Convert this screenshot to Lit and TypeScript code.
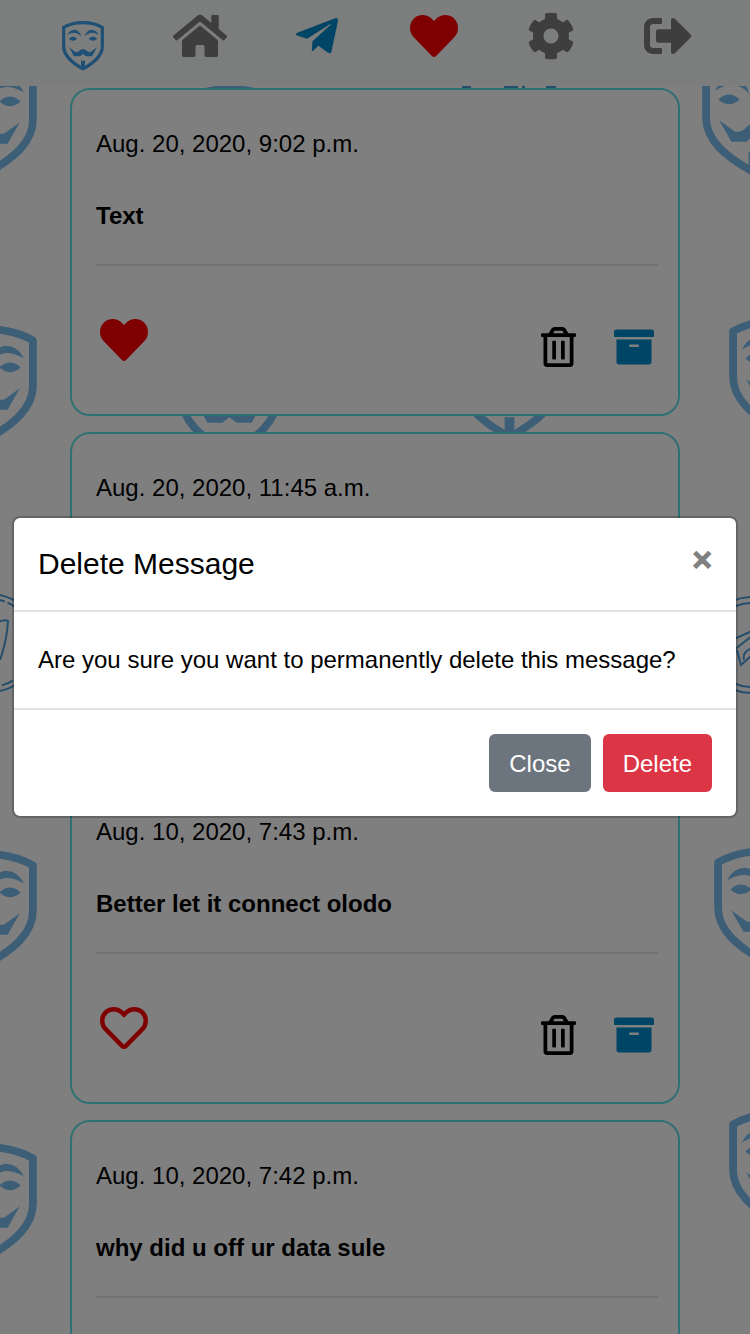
import { LitElement, html, css, svg } from "lit";
import { customElement, property } from "lit/decorators.js";

const ICONS: Record<string, { w: number; d: string }> = {
  home: { w: 576, d: "M280.37 148.26L96 300.11V464a16 16 0 0 0 16 16l112.06-.29a16 16 0 0 0 15.92-16V368a16 16 0 0 1 16-16h64a16 16 0 0 1 16 16v95.64a16 16 0 0 0 16 16.05L464 480a16 16 0 0 0 16-16V300L295.67 148.26a12.19 12.19 0 0 0-15.3 0zM571.6 251.47L488 182.56V44.05a12 12 0 0 0-12-12h-56a12 12 0 0 0-12 12v72.61L318.47 43a48 48 0 0 0-61 0L4.34 251.47a12 12 0 0 0-1.6 16.9l25.5 31A12 12 0 0 0 45.15 301l235.22-193.74a12.19 12.19 0 0 1 15.3 0L530.9 301a12 12 0 0 0 16.9-1.6l25.5-31a12 12 0 0 0-1.7-16.93z" },
  plane: { w: 448, d: "M446.7 98.6l-67.6 318.8c-5.1 22.5-18.4 28.1-37.3 17.5l-103-75.9-49.7 47.8c-5.5 5.5-10.1 10.1-20.7 10.1l7.4-104.9 190.9-172.5c8.3-7.4-1.8-11.5-12.9-4.1L117.8 284 16.2 252.2c-22.1-6.9-22.5-22.1 4.6-32.7L418.2 66.4c18.4-6.9 34.5 4.1 28.5 32.2z" },
  heart: { w: 512, d: "M462.3 62.6C407.5 15.9 326 24.3 275.7 76.2L256 96.5l-19.7-20.3C186.1 24.3 104.5 15.9 49.7 62.6c-62.8 53.6-66.1 149.8-9.9 207.9l193.5 199.8c12.5 12.9 32.8 12.9 45.3 0l193.5-199.8c56.3-58.1 53-154.3-9.8-207.9z" },
  heartOutline: { w: 512, d: "M458.4 64.3C400.6 15.7 311.3 23 256 79.3 200.7 23 111.4 15.6 53.6 64.3-21.6 127.6-10.6 230.8 43 285.5l175.4 178.7c10 10.2 23.4 15.9 37.6 15.9 14.3 0 27.6-5.6 37.6-15.8L469 285.6c53.5-54.7 64.7-157.9-10.6-221.3zm-23.6 187.5L259.4 430.5c-2.4 2.4-4.4 2.4-6.8 0L77.2 251.8c-36.5-37.2-43.9-107.6 7.3-150.7 38.9-32.7 98.9-27.8 136.5 10.5l35 35.7 35-35.7c37.8-38.5 97.8-43.2 136.5-10.6 51.1 43.1 43.5 113.9 7.3 150.8z" },
  cog: { w: 512, d: "M487.4 315.7l-42.6-24.6c4.3-23.2 4.3-47 0-70.2l42.6-24.6c4.9-2.8 7.1-8.6 5.5-14-11.1-35.6-30-67.8-54.7-94.6-3.8-4.1-10-5.1-14.8-2.3L380.8 110c-17.9-15.4-38.5-27.3-60.8-35.1V25.8c0-5.6-3.9-10.5-9.4-11.7-36.7-8.2-74.3-7.8-109.2 0-5.5 1.2-9.4 6.1-9.4 11.7V75c-22.2 7.9-42.8 19.8-60.8 35.1L88.7 85.5c-4.9-2.8-11-1.9-14.8 2.3-24.7 26.7-43.6 58.9-54.7 94.6-1.7 5.4.6 11.2 5.5 14L67.3 221c-4.3 23.2-4.3 47 0 70.2l-42.6 24.6c-4.9 2.8-7.1 8.6-5.5 14 11.1 35.6 30 67.8 54.7 94.6 3.8 4.1 10 5.1 14.8 2.3l42.6-24.6c17.9 15.4 38.5 27.3 60.8 35.1v49.2c0 5.6 3.9 10.5 9.4 11.7 36.7 8.2 74.3 7.8 109.2 0 5.5-1.2 9.4-6.1 9.4-11.7v-49.2c22.2-7.9 42.8-19.8 60.8-35.1l42.6 24.6c4.9 2.8 11 1.9 14.8-2.3 24.7-26.7 43.6-58.9 54.7-94.6 1.5-5.5-.7-11.3-5.6-14.1zM256 336c-44.1 0-80-35.9-80-80s35.9-80 80-80 80 35.9 80 80-35.9 80-80 80z" },
  signOut: { w: 512, d: "M497 273L329 441c-15 15-41 4.5-41-17v-96H152c-13.3 0-24-10.7-24-24v-96c0-13.3 10.7-24 24-24h136V88c0-21.4 25.9-32 41-17l168 168c9.3 9.4 9.3 24.6 0 34zM192 436v-40c0-6.6-5.4-12-12-12H96c-17.7 0-32-14.3-32-32V160c0-17.7 14.3-32 32-32h84c6.6 0 12-5.4 12-12V76c0-6.6-5.4-12-12-12H96c-53 0-96 43-96 96v192c0 53 43 96 96 96h84c6.6 0 12-5.4 12-12z" },
  trash: { w: 448, d: "M268 416h24a12 12 0 0 0 12-12V188a12 12 0 0 0-12-12h-24a12 12 0 0 0-12 12v216a12 12 0 0 0 12 12zM432 80h-82.41l-34-56.7A48 48 0 0 0 274.41 0H173.59a48 48 0 0 0-41.16 23.3L98.41 80H16A16 16 0 0 0 0 96v16a16 16 0 0 0 16 16h16v336a48 48 0 0 0 48 48h288a48 48 0 0 0 48-48V128h16a16 16 0 0 0 16-16V96a16 16 0 0 0-16-16zM171.84 50.91A6 6 0 0 1 177 48h94a6 6 0 0 1 5.15 2.91L293.61 80H154.39zM368 464H80V128h288zm-212-48h24a12 12 0 0 0 12-12V188a12 12 0 0 0-12-12h-24a12 12 0 0 0-12 12v216a12 12 0 0 0 12 12z" },
  archive: { w: 512, d: "M32 448c0 17.7 14.3 32 32 32h384c17.7 0 32-14.3 32-32V160H32v288zm160-212c0-6.6 5.4-12 12-12h104c6.6 0 12 5.4 12 12v8c0 6.6-5.4 12-12 12H204c-6.6 0-12-5.4-12-12v-8zM480 32H32C14.3 32 0 46.3 0 64v48c0 8.8 7.2 16 16 16h480c8.8 0 16-7.2 16-16V64c0-17.7-14.3-32-32-32z" },
};

const icon = (name: string) => html`<svg
  class="icon"
  viewBox="0 0 ${ICONS[name].w} 512"
  aria-hidden="true"
><path fill="currentColor" d=${ICONS[name].d}></path></svg>`;

// Guy Fawkes shield, drawn in a 126 x 150 box.
const mask = svg`
  <path fill="none" stroke="currentColor" stroke-width="9.500" stroke-linejoin="round"
    d="M5 19Q30 5 63 5T121 19V76C121 104 98 124 63 144C28 124 5 104 5 76Z"/>
  <path fill="currentColor" d="M16 42Q22 27 38 26Q52 27 58 46Q49 36 38 35Q26 35 16 42ZM110 42Q104 27 88 26Q74 27 68 46Q77 36 88 35Q100 35 110 42Z"/>
  <path fill="currentColor" d="M20 53Q33 41 46 53Q33 65 20 53ZM80 53Q93 41 106 53Q93 65 80 53Z"/>
  <path fill="currentColor" d="M21 79L40 93Q48 95 54 88Q58 83 63 85Q68 83 72 88Q78 95 86 93L105 79L90 106H72L63 99L54 106H36Z"/>
  <path fill="currentColor" d="M57 119H69V146H57Z"/>`;

const WALL_MASKS = [
  [-66, 59], [-66, 325], [-66, 850], [-66, 1143],
  [702, 57], [729, 316], [714, 847], [729, 1109],
  [178, 85], [178, 338], [458, 322],
];

@customElement("message-card")
class MessageCard extends LitElement {
  @property() date = "";
  @property() text = "";
  @property({ type: Boolean }) liked = false;

  static styles = css`
    :host {
      display: block;
      border: 2px solid #5ee2e4;
      border-radius: 20px;
      background: #fff;
      padding: 36px 20px 47px 24px;
      line-height: 36px;
    }
    p { margin: 0; min-height: 36px; }
    .text { margin-top: 36px; font-weight: 700; }
    hr { border: 0; border-top: 2px solid rgba(0, 0, 0, 0.1); margin: 30px 0 50px; }
    .actions { display: flex; justify-content: space-between; padding: 0 4px; }
    .tools { display: flex; gap: 38px; padding-top: 11px; }
    button {
      display: block;
      padding: 0;
      border: 0;
      background: none;
      cursor: pointer;
    }
    .like { align-self: flex-start; color: red; }
    .icon { display: block; height: 40px; }
    .like .icon { height: 48px; }
    .trash { color: #000; }
    .archive { color: #08c; }
  `;

  render() {
    return html`
      <p>${this.date}</p>
      <p class="text">${this.text}</p>
      <hr />
      <div class="actions">
        <button class="like" aria-label="Favourite">${icon(this.liked ? "heart" : "heartOutline")}</button>
        <div class="tools">
          <button class="trash" aria-label="Delete">${icon("trash")}</button>
          <button class="archive" aria-label="Archive">${icon("archive")}</button>
        </div>
      </div>
    `;
  }
}

@customElement("app-root")
class AppRoot extends LitElement {
  static styles = css`
    :host {
      display: block;
      position: relative;
      height: 100vh;
      overflow: hidden;
      background: #fff;
      color: #000;
      font: 24px/36px "Liberation Sans", Arial, sans-serif;
    }
    .wall {
      position: absolute;
      inset: 0;
      width: 100%;
      height: 100%;
      color: #78bcee;
    }
    .badge { fill: none; stroke: #4a9cd6; stroke-width: 2; }
    nav {
      position: relative;
      display: grid;
      grid-template-columns: repeat(6, 1fr);
      justify-items: center;
      align-items: start;
      box-sizing: border-box;
      height: 86px;
      padding: 12px 24px;
      background: #f8fafa;
    }
    nav a { display: block; color: #7c7c7c; }
    nav .icon { display: block; height: 48px; }
    nav .brand { color: #3c9fea; margin-top: 9px; }
    nav .logo { display: block; height: 50px; }
    nav .send { color: #08c; }
    nav .love { color: red; }
    main {
      position: relative;
      display: grid;
      gap: 16px;
      padding: 2px 70px;
    }
    .backdrop {
      position: absolute;
      inset: 0;
      display: flex;
      align-items: center;
      justify-content: center;
      padding: 0 12px;
      background: rgba(0, 0, 0, 0.5);
    }
    .dialog {
      flex: 1;
      border: 2px solid rgba(0, 0, 0, 0.2);
      border-radius: 8px;
      background: #fff;
      background-clip: padding-box;
    }
    header {
      display: flex;
      justify-content: space-between;
      align-items: flex-start;
      padding: 24px;
      border-bottom: 2px solid #dee2e6;
    }
    h1 { margin: 0; font-size: 30px; line-height: 44px; font-weight: 400; }
    .body { margin: 0; padding: 30px 24px; }
    footer {
      display: flex;
      justify-content: flex-end;
      gap: 12px;
      padding: 24px;
      border-top: 2px solid #dee2e6;
    }
    button { font: inherit; border: 0; cursor: pointer; }
    .x {
      padding: 0;
      background: none;
      color: #808080;
      font-size: 34px;
      line-height: 34px;
      font-weight: 700;
      -webkit-text-stroke: 1px #808080;
    }
    .btn { padding: 12px 20px 10px; border-radius: 6px; color: #fff; }
    .close { background: #6c757d; }
    .delete { background: #dc3545; }
  `;

  render() {
    return html`
      <svg class="wall" aria-hidden="true">
        ${WALL_MASKS.map(([x, y]) => svg`<svg x=${x} y=${y} width="103" height="120" viewBox="0 0 126 150" preserveAspectRatio="none">${mask}</svg>`)}
        <g class="badge">
          <circle cx="-10" cy="643" r="49"></circle>
          <circle cx="-10" cy="643" r="44" stroke-dasharray="12 3"></circle>
          <path d="M-4 623Q4 619 8 621Q7 640 0 660"></path>
          <circle cx="752" cy="645" r="48"></circle>
          <circle cx="752" cy="645" r="42"></circle>
          <path d="M734 639L752 631M734 650L752 636M737 650L741 665L752 655M744 660Q742 652 752 648"></path>
          <path d="M462 87h9M504 87h14M522 87h3M546 87h10"></path>
        </g>
      </svg>
      <nav aria-label="Main">
        <a class="brand" href="#" aria-label="Start"><svg class="logo" viewBox="0 0 126 150">${mask}</svg></a>
        <a href="#" aria-label="Home">${icon("home")}</a>
        <a class="send" href="#" aria-label="Send">${icon("plane")}</a>
        <a class="love" href="#" aria-label="Favourites">${icon("heart")}</a>
        <a href="#" aria-label="Settings">${icon("cog")}</a>
        <a href="#" aria-label="Sign out">${icon("signOut")}</a>
      </nav>
      <main>
        <message-card date="Aug. 20, 2020, 9:02 p.m." text="Text" liked></message-card>
        <message-card date="Aug. 20, 2020, 11:45 a.m."></message-card>
        <message-card date="Aug. 10, 2020, 7:43 p.m." text="Better let it connect olodo"></message-card>
        <message-card date="Aug. 10, 2020, 7:42 p.m." text="why did u off ur data sule"></message-card>
      </main>
      <div class="backdrop">
        <section class="dialog" role="dialog" aria-modal="true" aria-labelledby="title">
          <header>
            <h1 id="title">Delete Message</h1>
            <button class="x" aria-label="Dismiss">×</button>
          </header>
          <p class="body">Are you sure you want to permanently delete this message?</p>
          <footer>
            <button class="btn close">Close</button>
            <button class="btn delete">Delete</button>
          </footer>
        </section>
      </div>
    `;
  }
}
